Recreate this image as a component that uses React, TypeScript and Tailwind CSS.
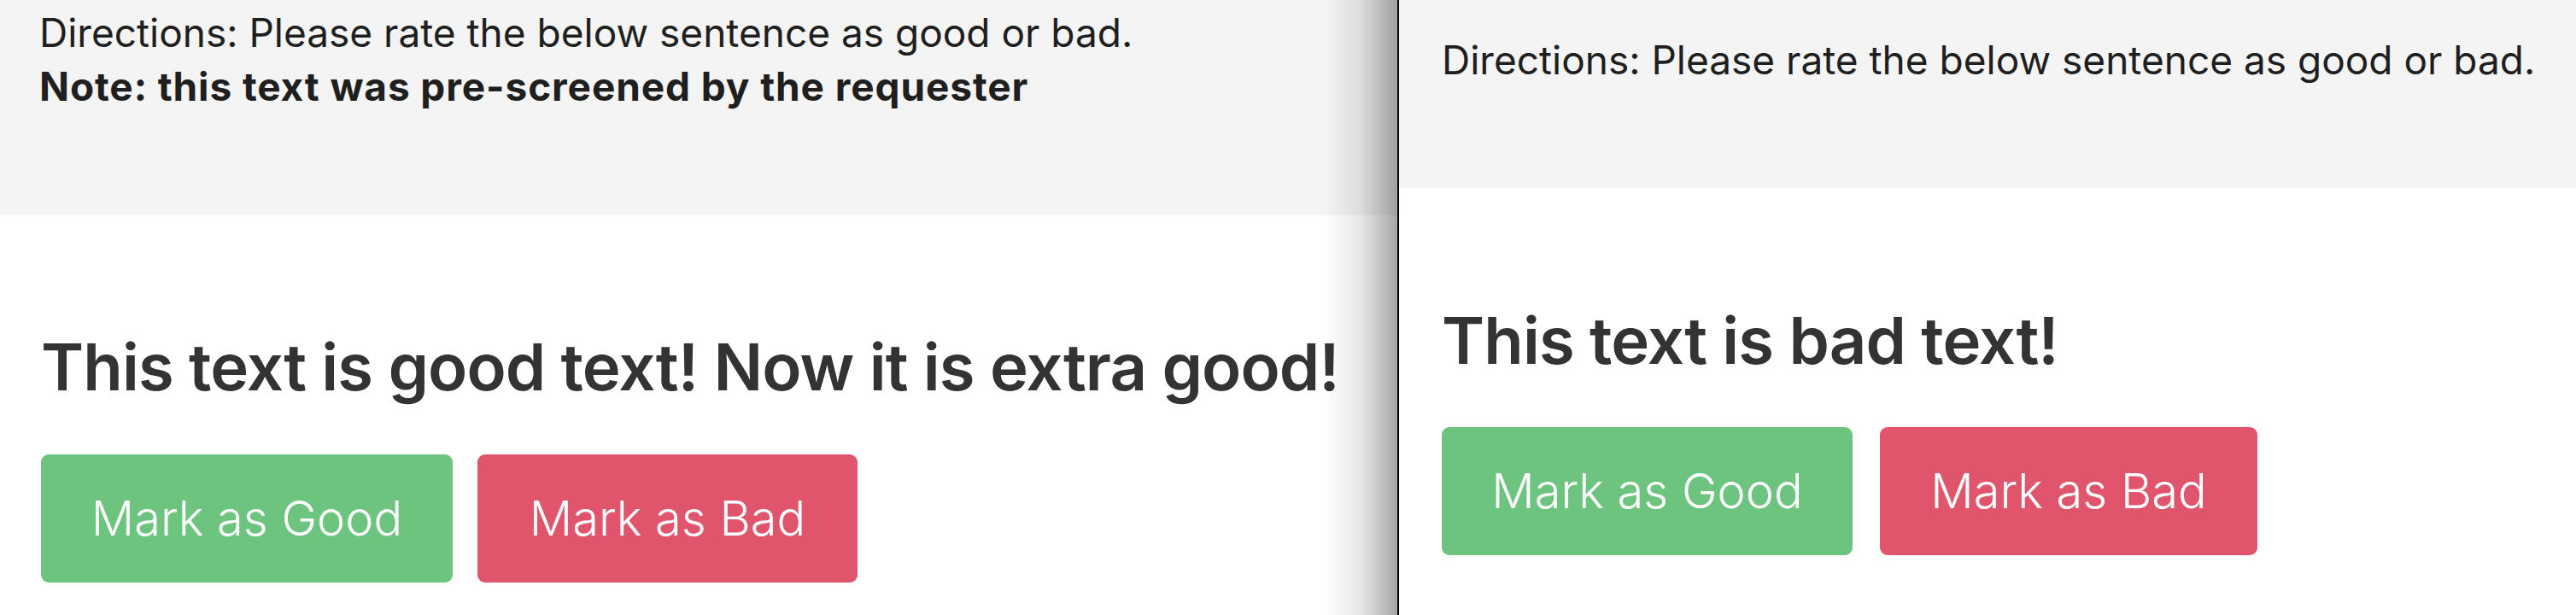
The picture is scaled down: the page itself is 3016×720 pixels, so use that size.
import React from 'react';

type PanelProps = {
  sentence: string;
  note?: string;
  headerClass: string;
  bodyClass: string;
  goodWidth: string;
  badWidth: string;
  gapClass: string;
};

function RatingPanel({ sentence, note, headerClass, bodyClass, goodWidth, badWidth, gapClass }: PanelProps) {
  return (
    <div className="flex flex-col">
      {/* Directions */}
      <div className={`bg-[#f4f4f4] text-[46px] leading-[63px] text-[#1f1f1f] ${headerClass}`}>
        <p>Directions: Please rate the below sentence as good or bad.</p>
        {note && <p className="font-bold tracking-[0.9px]">{note}</p>}
      </div>

      {/* Sentence + actions */}
      <div className={bodyClass}>
        <h2 className="text-[76px] leading-[91px] font-semibold text-[#333333] whitespace-nowrap tracking-[-0.9px]">
          {sentence}
        </h2>
        <div className={`flex ${gapClass}`}>
          <button className={`${goodWidth} h-[150px] rounded-[9px] bg-[#6cc47e] text-white text-[56px] font-light flex items-center justify-center`}>
            Mark as Good
          </button>
          <button className={`${badWidth} h-[150px] rounded-[9px] bg-[#e0546c] text-white text-[56px] font-light flex items-center justify-center`}>
            Mark as Bad
          </button>
        </div>
      </div>
    </div>
  );
}

export default function App() {
  return (
    <div
      className="w-[3016px] h-[720px] flex overflow-hidden bg-white"
      style={{ fontFamily: 'Inter, "Noto Sans", "Liberation Sans", sans-serif' }}
    >
      {/* Left window */}
      <div className="relative w-[1636px] shrink-0 bg-white">
        <RatingPanel
          sentence="This text is good text! Now it is extra good!"
          note="Note: this text was pre-screened by the requester"
          headerClass="h-[252px] pl-[46px] pt-[7px]"
          bodyClass="pl-[48px] pt-[132px] flex flex-col gap-[57px]"
          goodWidth="w-[482px]"
          badWidth="w-[445px]"
          gapClass="gap-[29px]"
        />
        {/* shadow cast by the right window */}
        <div className="absolute right-0 top-0 h-full w-[84px] bg-gradient-to-r from-black/0 via-black/10 to-black/35" />
      </div>

      {/* Window edge */}
      <div className="w-[2px] shrink-0 bg-black" />

      {/* Right window */}
      <div className="flex-1">
        <RatingPanel
          sentence="This text is bad text!"
          headerClass="h-[220px] pl-[50px] pt-[39px]"
          bodyClass="pl-[50px] pt-[133px] flex flex-col gap-[56px]"
          goodWidth="w-[481px]"
          badWidth="w-[442px]"
          gapClass="gap-[32px]"
        />
      </div>
    </div>
  );
}
